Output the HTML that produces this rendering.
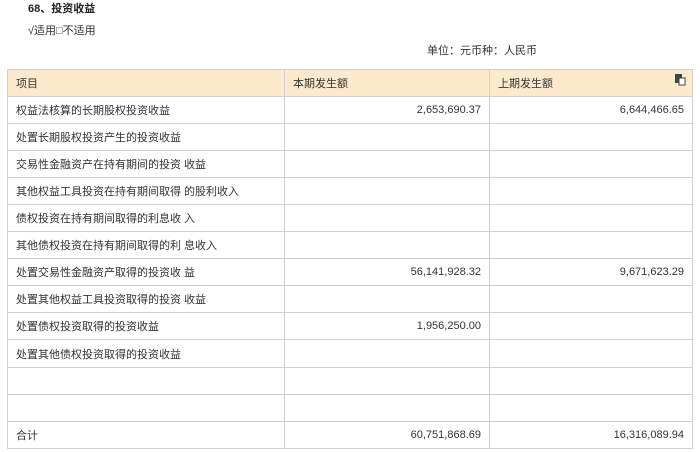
<!DOCTYPE html>
<html><head><meta charset="utf-8"><style>
body{margin:0;width:700px;height:452px;background:#fff;font-family:"Liberation Sans","Noto Sans CJK SC",sans-serif;font-size:11px;color:#333;position:relative;overflow:hidden}
.t{position:absolute;white-space:nowrap}
table{position:absolute;left:7px;top:69px;border-collapse:collapse;width:686px}
td{border:1px solid #cfcfcf;padding:0 8px;height:26px;font-size:11px}
td:nth-child(1){width:260px}td:nth-child(2){width:188px}
.r{text-align:right}
tr.h td{background:#fdeacd;height:26px}
</style></head><body>
<div class="t" style="left:28px;top:0px;font-weight:bold;color:#222">68、投资收益</div>
<div class="t" style="left:28px;top:22px">√适用□不适用</div>
<div class="t" style="left:427px;top:42px">单位：元币种：人民币</div>
<table>
<tr class="h"><td>项目</td><td>本期发生额</td><td style="position:relative">上期发生额<svg style="position:absolute;right:6px;top:4px" width="11" height="12" viewBox="0 0 11 12"><rect x="0" y="0" width="7" height="9" fill="#444"/><rect x="4" y="4" width="6" height="7" fill="#fff" stroke="#444"/></svg></td></tr>
<tr><td>权益法核算的长期股权投资收益</td><td class="r">2,653,690.37</td><td class="r">6,644,466.65</td></tr>
<tr><td>处置长期股权投资产生的投资收益</td><td></td><td></td></tr>
<tr><td>交易性金融资产在持有期间的投资 收益</td><td></td><td></td></tr>
<tr><td>其他权益工具投资在持有期间取得 的股利收入</td><td></td><td></td></tr>
<tr><td>债权投资在持有期间取得的利息收 入</td><td></td><td></td></tr>
<tr><td>其他债权投资在持有期间取得的利 息收入</td><td></td><td></td></tr>
<tr><td>处置交易性金融资产取得的投资收 益</td><td class="r">56,141,928.32</td><td class="r">9,671,623.29</td></tr>
<tr><td>处置其他权益工具投资取得的投资 收益</td><td></td><td></td></tr>
<tr><td>处置债权投资取得的投资收益</td><td class="r">1,956,250.00</td><td></td></tr>
<tr><td style="height:27px">处置其他债权投资取得的投资收益</td><td></td><td></td></tr>
<tr><td style="height:24px"></td><td></td><td></td></tr>
<tr><td style="height:24px"></td><td></td><td></td></tr>
<tr><td>合计</td><td class="r">60,751,868.69</td><td class="r">16,316,089.94</td></tr>
</table>
</body></html>
